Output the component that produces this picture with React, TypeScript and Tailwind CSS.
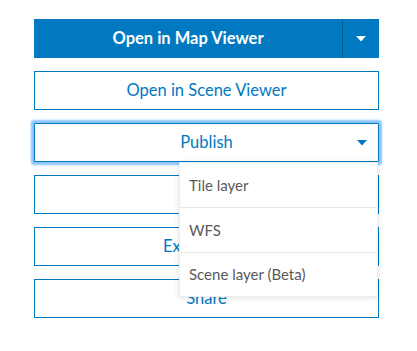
import React from 'react';

const font = { fontFamily: '"Lato", "Noto Sans", sans-serif' };

function Caret({ className }: { className: string }) {
  return (
    <svg width="10" height="6" viewBox="0 0 10 6" className={className}>
      <path d="M0 0h10L5 5.5z" fill="currentColor" />
    </svg>
  );
}

function OutlineButton({ label }: { label: string }) {
  return (
    <button className="h-[39px] w-full border border-[#0079c1] bg-white text-[16.5px] text-[#0079c1]">
      {label}
    </button>
  );
}

export default function App() {
  const items = ['Tile layer', 'WFS', 'Scene layer (Beta)'];

  return (
    <div className="h-[351px] w-[417px] bg-white" style={font}>
      <div className="flex w-[345px] flex-col gap-[13px] pl-[34px] pt-[19px] box-content">
        <div className="flex h-[39px] w-full bg-[#0079c1] text-white">
          <button className="flex-1 text-[16.5px] font-bold">Open in Map Viewer</button>
          <div className="w-px bg-[#005e95]" />
          <button className="flex w-[36px] items-center justify-center">
            <Caret className="text-white" />
          </button>
        </div>

        <OutlineButton label="Open in Scene Viewer" />

        <div className="relative">
          <button className="relative flex h-[39px] w-full items-center justify-center rounded-[1px] border border-[#0079c1] bg-white text-[16.5px] text-[#0079c1] shadow-[0_0_2px_3px_#8cc4fa]">
            Publish
            <Caret className="absolute right-[11px] top-[16px] text-[#0079c1]" />
          </button>
          <div className="absolute left-[145px] top-[39px] z-10 w-[199px] border border-[#ececec] bg-white shadow-[0_1px_6px_rgba(0,0,0,0.12)]">
            {items.map((item, i) => (
              <div
                key={item}
                className={`flex items-center px-[9px] text-[15px] text-[#595959] ${
                  i < items.length - 1 ? 'h-[45px] border-b border-[#e8e8e8]' : 'h-[43px]'
                }`}
              >
                {item}
              </div>
            ))}
          </div>
        </div>

        <OutlineButton label="Create" />
        <OutlineButton label="Export Data" />
        <OutlineButton label="Share" />
      </div>
    </div>
  );
}
